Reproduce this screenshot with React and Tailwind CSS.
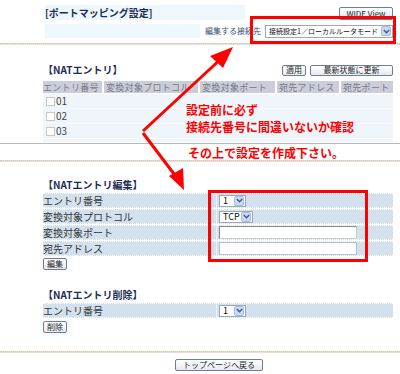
import React from "react";

const F = { fontFamily: '"Noto Sans CJK JP", "Noto Sans", sans-serif' };

function Chev() {
  return (
    <span className="flex h-[10px] w-[10px] shrink-0 items-center justify-center rounded-[2px] bg-[#c9d9f2] border border-[#a9bde0]">
      <svg width="7" height="5" viewBox="0 0 7 5"><path d="M0.8 1 L3.5 3.8 L6.2 1" fill="none" stroke="#3a5aa0" strokeWidth="1.4" /></svg>
    </span>
  );
}

function Sel({ text, w }) {
  return (
    <div className={`flex h-[12px] items-center justify-between border border-[#9aa8bc] bg-white pl-[3px] pr-[1px] ${w}`}>
      <span className="whitespace-nowrap text-[9px] leading-none text-[#111]">{text}</span>
      <Chev />
    </div>
  );
}

function Btn({ children, w }) {
  return (
    <div className={`flex h-[11px] items-center justify-center whitespace-nowrap rounded-[2px] border border-[#6d7d99] bg-[linear-gradient(#ffffff,#e6e9ee)] text-[8px] leading-none text-[#222] ${w}`}>
      {children}
    </div>
  );
}

function Sep() {
  return <div className="h-[2px] w-full border-t border-dotted border-[#cfc6b6] bg-[#e6dfd2]" />;
}

function EditRow({ label, children }) {
  return (
    <div className="mt-[1px] flex h-[15px] w-[350px] border-y border-dotted border-white bg-[#d3e1ef]">
      <div className="flex w-[173px] items-center whitespace-nowrap text-[10px] leading-none text-[#333]">{label}</div>
      <div className="w-[1px] bg-[#eef3f8]" />
      <div className="flex flex-1 items-center pl-[2px]">{children}</div>
    </div>
  );
}

export default function App() {
  return (
    <div className="relative h-[374px] w-[400px] overflow-hidden bg-white" style={F}>
      {/* top */}
      <div className="pl-[45px] pr-[7px] pt-[5px]">
        <div className="flex h-[15px] justify-between">
          <div className="flex w-[200px] items-center whitespace-nowrap bg-[#eef8fc] text-[10px] font-bold leading-none text-[#1c2d55]">[ポートマッピング設定]</div>
          <div className="mt-[2px] flex h-[13px] w-[54px] items-center justify-center whitespace-nowrap rounded-[2px] border border-[#6d7d99] bg-[linear-gradient(#ffffff,#e3e6ec)] text-[8px] leading-none text-[#222]">WIDE View</div>
        </div>
        <div className="mt-[4px] flex h-[14px] items-center">
          <div className="h-[14px] w-[155px] bg-[#eef8fc]" />
          <div className="ml-[5px] whitespace-nowrap text-[8px] leading-none text-[#34507a]">編集する接続先</div>
          <div className="ml-auto flex h-[13px] w-[128px] items-center justify-between border border-[#9aa8bc] bg-white pl-[3px] pr-[1px]">
            <span className="whitespace-nowrap text-[7px] leading-none text-[#111]">接続設定1／ローカルルータモード</span>
            <Chev />
          </div>
        </div>
      </div>
      <div className="mt-[5px]"><Sep /></div>

      {/* NAT entry */}
      <div className="pl-[43px] pr-[7px]">
        <div className="mt-[18px] flex h-[14px] items-center">
          <div className="whitespace-nowrap text-[10px] font-bold leading-none text-[#1c2d55]">【NATエントリ】</div>
          <div className="ml-auto flex gap-[4px]">
            <Btn w="w-[24px]">適用</Btn>
            <Btn w="w-[83px]">最新状態に更新</Btn>
          </div>
        </div>
        <div className="mt-[4px] flex h-[12px] gap-[2px] whitespace-nowrap text-[9px] leading-none tracking-[0.3px] text-[#777a86]">
          <div className="flex w-[59px] items-center bg-[#cbced8]">エントリ番号</div>
          <div className="flex w-[94px] items-center bg-[#cbced8] pl-[2px]">変換対象プロトコル</div>
          <div className="flex w-[75px] items-center bg-[#cbced8] pl-[2px]">変換対象ポート</div>
          <div className="flex w-[62px] items-center bg-[#cbced8] pl-[2px]">宛先アドレス</div>
          <div className="flex flex-1 items-center bg-[#cbced8] pl-[2px]">宛先ポート</div>
        </div>
        <div className="mt-[1px] bg-[#eef6fb] pb-[3px]">
          {["01", "02", "03"].map((n) => (
            <div key={n} className="flex h-[15px] items-center border-b border-dotted border-white pl-[3px]">
              <span className="h-[9px] w-[9px] border border-[#c8c8c8] bg-white" />
              <span className="ml-[1px] text-[10px] leading-none text-[#444]">{n}</span>
            </div>
          ))}
        </div>
      </div>
      <div className="mt-[1px] h-[1px] w-full bg-[#b8b8b8]" />

      <div className="mt-[16px]"><Sep /></div>

      {/* edit */}
      <div className="pl-[43px]">
        <div className="mt-[18px] h-[12px] whitespace-nowrap text-[10px] font-bold leading-none text-[#1c2d55]">【NATエントリ編集】</div>
        <div className="mt-[1px]">
          <EditRow label="エントリ番号"><Sel text="1" w="w-[27px]" /></EditRow>
          <EditRow label="変換対象プロトコル"><Sel text="TCP" w="w-[34px]" /></EditRow>
          <EditRow label="変換対象ポート"><div className="h-[13px] w-[138px] border border-t-[#888] border-l-[#888] border-r-[#ccc] border-b-[#ccc] bg-white" /></EditRow>
          <EditRow label="宛先アドレス"><div className="h-[13px] w-[138px] border border-[#b8c2d0] bg-white" /></EditRow>
        </div>
        <div className="mt-[2px]"><Btn w="w-[24px] h-[12px]">編集</Btn></div>

        <div className="mt-[20px] h-[12px] whitespace-nowrap text-[10px] font-bold leading-none text-[#1c2d55]">【NATエントリ削除】</div>
        <div>
          <EditRow label="エントリ番号"><Sel text="1" w="w-[27px]" /></EditRow>
        </div>
        <div className="mt-[3px]"><Btn w="w-[24px] h-[12px]">削除</Btn></div>
      </div>

      <div className="mt-[18px]"><Sep /></div>
      <div className="mt-[6px] pl-[175px]">
        <Btn w="w-[88px] h-[12px]">トップページへ戻る</Btn>
      </div>

      {/* annotations */}
      <div className="absolute left-[250px] top-[16px] h-[28px] w-[146px] border-[3px] border-[#ff0000]" />
      <div className="absolute left-[208px] top-[190px] h-[72px] w-[160px] border-[3px] border-[#ff0000]" />
      <div className="absolute left-[186px] top-[101px] whitespace-nowrap text-[12px] font-bold leading-[17px] text-[#ff0000]">
        <div>設定前に必ず</div>
        <div>接続先番号に間違いないか確認</div>
      </div>
      <div className="absolute left-[188px] top-[146px] whitespace-nowrap text-[12px] font-bold leading-[14px] text-[#ff0000]">その上で設定を作成下さい。</div>
      <svg className="absolute left-0 top-0" width="400" height="374" viewBox="0 0 400 374">
        <line x1="143" y1="131" x2="224" y2="56" stroke="#ff0000" strokeWidth="3" />
        <polygon points="233,47 210,56 223,68" fill="#ff0000" />
        <line x1="143" y1="133" x2="177" y2="178" stroke="#ff0000" strokeWidth="3" />
        <polygon points="184,190 169,176 183,168" fill="#ff0000" />
      </svg>
    </div>
  );
}
